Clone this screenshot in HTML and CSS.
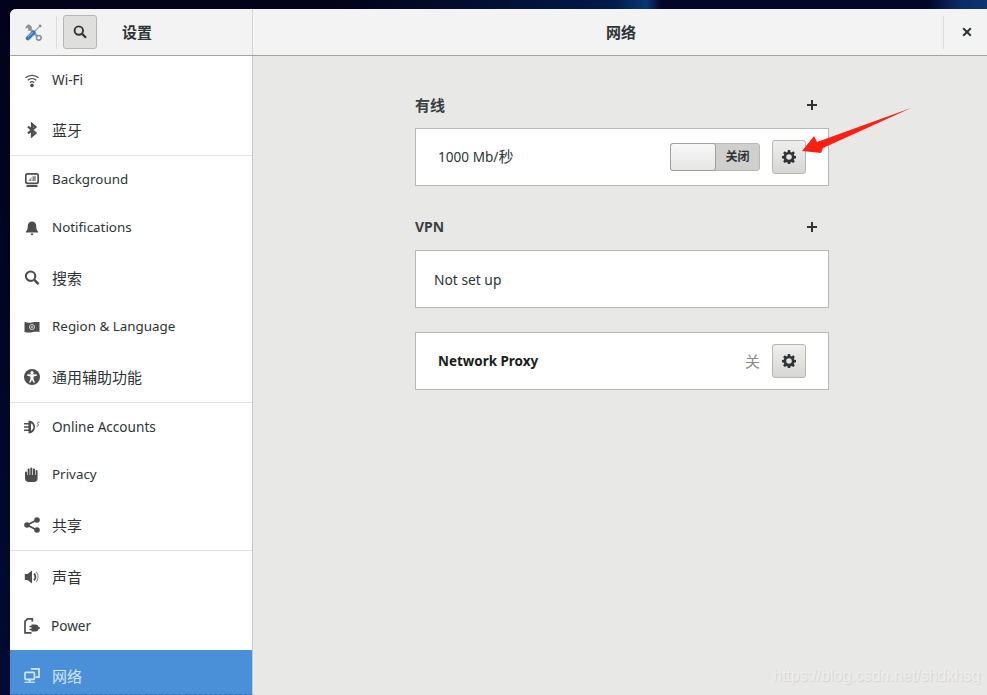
FILE: index.html
```html
<!DOCTYPE html>
<html lang="zh">
<head>
<meta charset="utf-8">
<title>设置</title>
<link rel="stylesheet" href="styles.css">
</head>
<body>
<div class="window">
  <header class="titlebar">
    <div class="tb-left">
      <svg class="app-icon" viewBox="0 0 16 16" width="17" height="17">
        <path d="M3.500 3.500 12.500 12.500" stroke="#9a9ea2" stroke-width="2.400"/>
        <path d="M4.300 .6A3.400 3.400 0 0 0 .6 4.600l1.800-1.200L3.600 4.600 2.400 6.300A3.400 3.400 0 0 0 6.500 2.800z" fill="#8b9094"/>
        <circle cx="13" cy="13" r="2.200" fill="#f3f3f3" stroke="#8b9094" stroke-width="1.500"/>
        <path d="M15 1 8.500 7.500" stroke="#a6aaad" stroke-width="1.400"/>
        <path d="M14 .2l1.800 1.800-1.200 1-1.600-1.600z" fill="#777c80"/>
        <path d="M8 8 2.700 13.300" stroke="#3a78c2" stroke-width="4" stroke-linecap="round"/>
        <path d="M7.400 7.600 2.800 12.200" stroke="#86b5e5" stroke-width="1"/>
      </svg>
      <span class="tb-sep"></span>
      <button class="tb-btn" type="button">
        <svg viewBox="0 0 16 16" width="16" height="16"><circle cx="6.800" cy="6.600" r="4.200" fill="none" stroke="#2e3436" stroke-width="1.900"/><path d="M10 9.800l4 4" stroke="#2e3436" stroke-width="2.300"/></svg>
      </button>
      <span class="tb-title">设置</span>
    </div>
    <div class="tb-right">
      <span class="tb-center">网络</span>
      <span class="tb-sep close-sep"></span>
      <svg class="close" viewBox="0 0 10 10" width="10" height="10"><path d="M1.200 1.200 8.800 8.800M8.800 1.200 1.200 8.800" stroke="#2e3436" stroke-width="2"/></svg>
    </div>
  </header>
  <div class="body">
    <nav class="sidebar">
      <div class="row latin">
        <svg viewBox="0 0 16 16" width="16" height="16"><path d="M1.500 5.800a10 10 0 0 1 13 0M3.700 8.200a6.700 6.700 0 0 1 8.600 0M5.900 10.500a3.400 3.400 0 0 1 4.200 0" fill="none" stroke="#4d4d4d" stroke-width="1.300"/><circle cx="8" cy="13.400" r="1.800" fill="#4d4d4d"/></svg>
        <span class="wide">Wi-Fi</span>
      </div>
      <div class="row cjk sep">
        <svg viewBox="0 0 16 16" width="16" height="16"><path d="M4 4.600 11.500 10.900 8 14V2l3.500 3.100L4 11.400" fill="none" stroke="#4d4d4d" stroke-width="2.200"/></svg>
        <span>蓝牙</span>
      </div>
      <div class="row latin">
        <svg viewBox="0 0 16 16" width="16" height="16"><rect x="1.800" y="1.800" width="12.400" height="9.600" rx="1.800" fill="none" stroke="#4d4d4d" stroke-width="1.700"/><path d="M4.200 9 7.400 5v4zM8.400 4.200h3.400V9H8.400z" fill="#8a8a8a"/><path d="M2.500 14h11" stroke="#4d4d4d" stroke-width="1.800"/></svg>
        <span>Background</span>
      </div>
      <div class="row latin">
        <svg viewBox="0 0 16 16" width="16" height="16"><path d="M8 1.500a4.200 4.200 0 0 1 4.200 4.200c0 3.200.6 4.700 2 6v.8H1.800v-.8c1.400-1.300 2-2.800 2-6A4.200 4.200 0 0 1 8 1.500z" fill="#4d4d4d"/><path d="M6.800 13.600h2.400V15H6.800z" fill="#4d4d4d"/></svg>
        <span>Notifications</span>
      </div>
      <div class="row cjk">
        <svg viewBox="0 0 16 16" width="16" height="16"><circle cx="6.600" cy="6.200" r="4.700" fill="none" stroke="#4d4d4d" stroke-width="2.100"/><path d="M10 9.600l4.600 4.600" stroke="#4d4d4d" stroke-width="2.600"/></svg>
        <span>搜索</span>
      </div>
      <div class="row latin">
        <svg viewBox="0 0 16 16" width="16" height="16"><path d="M.5 3c3 1 5 1 7.500.4s5-.6 7.500-.4v10c-2.500-.4-5-.4-7.500.2s-5 .4-7.500-.2z" fill="#4d4d4d"/><circle cx="8" cy="8" r="2.500" fill="none" stroke="#d8d8d8" stroke-width="1"/><circle cx="8" cy="8" r=".9" fill="#d8d8d8"/></svg>
        <span>Region &amp; Language</span>
      </div>
      <div class="row cjk sep">
        <svg viewBox="0 0 16 16" width="16" height="16"><circle cx="8" cy="8" r="8" fill="#4d4d4d"/><circle cx="8" cy="3.700" r="1.600" fill="#fff"/><path d="M3.200 5.300h9.600v1.400l-3.200.8v2.200l1.300 3.700-1.300.4L8 10.700l-1.600 3.100-1.300-.4 1.300-3.700V7.500l-3.200-.8z" fill="#fff"/></svg>
        <span>通用辅助功能</span>
      </div>
      <div class="row latin">
        <svg viewBox="0 0 16 16" width="16" height="16"><path d="M0 4.800h5M0 8h5M0 11.200h5" stroke="#4d4d4d" stroke-width="1.500"/><path d="M4.500 1.500c4 0 6.500 3 6.500 6.500s-2.500 6.500-6.500 6.500z" fill="#4d4d4d"/><path d="M7 4.200c1.600 1 2.400 2.300 2.400 3.800S8.600 10.800 7 11.800z" fill="#fff"/><path d="M15.500 3.400c-1.700-.8-2.600.6-1.500 1.700s.4 2.500-1.400 1.900" fill="none" stroke="#6a6a6a" stroke-width="1"/></svg>
        <span class="wide">Online Accounts</span>
      </div>
      <div class="row latin">
        <svg viewBox="0 0 16 16" width="16" height="16"><path d="M1 5.500a1 1 0 0 1 2 0V8h.6V2.500a1 1 0 0 1 2 0V8h.7V1.500a1 1 0 0 1 2 0V8h.7V2.500a1 1 0 0 1 2 0V8h.6V4a1 1 0 0 1 2 0v7.500c0 2-1.500 3.500-3.500 3.500H4.500C2.500 15 1 13.500 1 11.500z" fill="#4d4d4d"/></svg>
        <span>Privacy</span>
      </div>
      <div class="row cjk sep">
        <svg viewBox="0 0 16 16" width="16" height="16"><path d="M13 3 3 8l10 5" fill="none" stroke="#4d4d4d" stroke-width="1.800"/><circle cx="13" cy="3" r="2.800" fill="#4d4d4d"/><circle cx="3" cy="8" r="2.800" fill="#4d4d4d"/><circle cx="13" cy="13" r="2.800" fill="#4d4d4d"/></svg>
        <span>共享</span>
      </div>
      <div class="row cjk">
        <svg viewBox="0 0 16 16" width="16" height="16"><path d="M.8 5h2.700l4.500-3.500v13L3.500 11H.8z" fill="#4d4d4d"/><path d="M10 4.600a4.800 4.800 0 0 1 0 6.800" fill="none" stroke="#4d4d4d" stroke-width="1.800"/><path d="M12.200 3a7.500 7.500 0 0 1 0 10" fill="none" stroke="#9a9a9a" stroke-width="1.200"/></svg>
        <span>声音</span>
      </div>
      <div class="row latin">
        <svg viewBox="0 0 16 16" width="16" height="16"><path d="M7.500 14.800H1V3.300L3.500.8h4.800v2.700" fill="none" stroke="#4d4d4d" stroke-width="1.700"/><path d="M7.500 6.500h3.700a3.400 3.400 0 0 1 0 7H7.500z" fill="#4d4d4d"/><path d="M5.500 8.500h2.500M5.500 11.500h2.500M13 10h3" stroke="#4d4d4d" stroke-width="1.700"/></svg>
        <span class="shift wide">Power</span>
      </div>
      <div class="row cjk selected">
        <svg viewBox="0 0 16 16" width="16" height="16"><path d="M7 .9h8v8.200h-3.500" fill="none" stroke="#d5e5f5" stroke-width="1.700"/><rect x="1" y="4.400" width="9.400" height="7" rx=".8" fill="none" stroke="#d5e5f5" stroke-width="1.700"/><path d="M.5 13.600h10.400v1.300H.5z" fill="#d5e5f5"/><path d="M4.600 11.400h2v2.400h-2z" fill="#d5e5f5"/></svg>
        <span>网络</span>
      </div>
    </nav>
    <main class="content">
      <section class="group">
        <div class="group-head"><h2 class="zh">有线</h2><svg class="plus" viewBox="0 0 10 10" width="10" height="10"><path d="M5 0v10M0 5h10" stroke="#2e3436" stroke-width="2"/></svg></div>
        <div class="card">
          <span class="card-label speed">1000 Mb/<span class="zh">秒</span></span>
          <div class="switch"><span class="knob"></span><span class="switch-off">关闭</span></div>
          <button class="gear" type="button"><svg viewBox="0 0 16 16" width="14" height="14"><path d="M6.700 0h2.600l.4 2.200 1.300.6L12.900 1.500l1.800 1.800-1.300 1.900.6 1.300 2 .4v2.600l-2 .4-.6 1.300 1.300 1.900-1.800 1.800-1.900-1.300-1.300.6-.4 2.200H6.700l-.4-2.200-1.300-.6-1.900 1.300-1.800-1.800 1.300-1.900-.6-1.300-2-.4V6.900l2-.4.600-1.300-1.300-1.900 1.800-1.800L5 2.800l1.300-.6zM8 4.800a3.200 3.200 0 1 0 0 6.400 3.200 3.200 0 0 0 0-6.400z" fill="#2e3436" fill-rule="evenodd"/></svg></button>
        </div>
      </section>
      <section class="group vpn">
        <div class="group-head"><h2>VPN</h2><svg class="plus" viewBox="0 0 10 10" width="10" height="10"><path d="M5 0v10M0 5h10" stroke="#2e3436" stroke-width="2"/></svg></div>
        <div class="card"><span class="card-label plain">Not set up</span></div>
      </section>
      <div class="card proxy">
        <span class="card-label strong">Network Proxy</span>
        <span class="state">关</span>
        <button class="gear" type="button"><svg viewBox="0 0 16 16" width="14" height="14"><path d="M6.700 0h2.600l.4 2.200 1.300.6L12.900 1.500l1.800 1.800-1.300 1.900.6 1.300 2 .4v2.600l-2 .4-.6 1.300 1.300 1.900-1.800 1.800-1.900-1.300-1.300.6-.4 2.200H6.700l-.4-2.200-1.300-.6-1.900 1.300-1.800-1.800 1.300-1.900-.6-1.300-2-.4V6.900l2-.4.600-1.300-1.300-1.900 1.800-1.800L5 2.800l1.300-.6zM8 4.800a3.200 3.200 0 1 0 0 6.400 3.200 3.200 0 0 0 0-6.400z" fill="#2e3436" fill-rule="evenodd"/></svg></button>
      </div>
    </main>
  </div>
</div>
<svg class="arrow" viewBox="0 0 120 60" width="120" height="60"><path d="M2 46 14 31 17 37 111 3 23 43 21 48z" fill="#fb2012"/></svg>
<span class="watermark">https://blog.csdn.net/shdxhsq</span>
</body>
</html>
```
FILE: styles.css
```css
* { box-sizing: border-box; }
html, body { height: 100%; }
body {
  margin: 0;
  height: 695px;
  overflow: hidden;
  padding: 9px 0 0 10px;
  position: relative;
  background:
    linear-gradient(90deg, #02021a 0, #02021a 34%, #011a48 62%, #0a3672 65.5%, #03062a 67%, #03062a 94%, #0b2a63 97%, #0d3570 100%) no-repeat top / 100% 9px,
    linear-gradient(180deg, #02021a, #000a33);
  font-family: "Noto Sans", "Noto Sans CJK SC", sans-serif;
  font-size: 13.4px;
  color: #2e3436;
}
.window {
  width: 977px;
  height: 686px;
  display: flex;
  flex-direction: column;
  border-radius: 6px 0 0 0;
  overflow: hidden;
  background: #e8e8e7;
}
.titlebar {
  height: 47px;
  flex: none;
  display: flex;
  background: #f3f3f3;
  border-bottom: 1px solid #a3a39f;
}
.tb-left {
  width: 243px;
  flex: none;
  display: flex;
  align-items: center;
  border-right: 1px solid #d4d4d2;
  padding-left: 15px;
}
.app-icon { flex: none; }
.tb-sep { width: 1px; height: 33px; background: #dcdcda; flex: none; }
.tb-left .tb-sep { margin-left: 14px; }
.tb-btn {
  width: 34px;
  height: 34px;
  margin-left: 6px;
  padding: 0;
  display: flex;
  align-items: center;
  justify-content: center;
  border: 1px solid #b6b6b3;
  border-radius: 3px;
  background: #dfdfdd;
}
.tb-title { margin: -2px 0 0 25px; font-weight: 700; font-size: 15px; color: #2e3436; }
.tb-right {
  flex: 1;
  display: flex;
  align-items: center;
  position: relative;
  justify-content: flex-end;
}
.tb-center { position: absolute; left: 353px; top: 12px; font-weight: 700; font-size: 15px; }
.close-sep { margin-right: 18px; }
.close { margin-right: 15px; }
.body { flex: 1; display: flex; min-height: 0; }
.sidebar {
  width: 243px;
  flex: none;
  background: #fff;
  border-right: 1px solid #c9c9c6;
  overflow: hidden;
}
.row {
  display: flex;
  align-items: center;
  gap: 12px;
  padding-left: 14px;
  color: #2e3436;
  position: relative;
}
.row svg { flex: none; }
.latin { height: 48px; }
.latin span { margin-top: -2px; }
.latin .wide { font-size: 13.6px; }
.cjk { height: 51px; font-size: 15px; }
.sep { height: 52px; border-bottom: 1px solid #e2e2e0; }
.shift { margin-left: -1px; }
.selected { background: #4a90d9; color: #d5e5f5; }
.selected::after {
  content: "";
  position: absolute;
  left: 0;
  right: 0;
  top: 44px;
  border-top: 1px dashed #2f6fb5;
}
.content { flex: 1; padding: 38px 0 0 162px; }
.group-head {
  width: 414px;
  height: 22px;
  margin-bottom: 12px;
  display: flex;
  align-items: center;
  justify-content: space-between;
  padding-right: 12px;
}
.group-head h2 { margin: -2px 0 0; font-size: 14px; font-weight: 700; color: #3a3f41; }
.group-head .zh { font-size: 15px; }
.zh { font-size: 15px; }
.plus { flex: none; }
.vpn { margin-top: 30px; }
.card {
  width: 414px;
  height: 58px;
  background: #fff;
  border: 1px solid #b8b8b5;
  display: flex;
  align-items: center;
  padding: 0 22px;
}
.card-label { flex: 1; color: #2e3436; }
.speed { margin-top: -3px; font-size: 13.6px; }
.plain { margin-left: -4px; font-size: 13.8px; }
.strong { font-weight: 700; font-size: 13.45px; color: #1a1c1d; }
.proxy { margin-top: 24px; }
.switch {
  width: 90px;
  height: 28px;
  display: flex;
  border: 1px solid #b8b8b5;
  border-radius: 3px;
  background: #cfcfcd;
  margin-right: 12px;
}
.knob {
  width: 46px;
  margin: -1px 0 -1px -1px;
  background: linear-gradient(180deg, #f8f8f8, #e6e6e5);
  border: 1px solid #9e9e9a;
  border-radius: 3px;
}
.switch-off {
  flex: 1;
  text-align: center;
  font-size: 12px;
  font-weight: 700;
  line-height: 26px;
  color: #2e3436;
}
.state { color: #8a8c8c; margin: -2px 12px 0 0; font-size: 15px; }
.gear {
  width: 34px;
  height: 34px;
  padding: 0;
  display: flex;
  align-items: center;
  justify-content: center;
  border: 1px solid #b6b6b3;
  border-radius: 3px;
  background: linear-gradient(180deg, #efefee, #d6d6d4);
}
.arrow { position: absolute; left: 800px; top: 105px; }
.watermark {
  position: absolute;
  left: 773px;
  top: 666px;
  font-family: "Liberation Sans", sans-serif;
  font-size: 16px;
  line-height: 20px;
  color: #eeeeee;
  text-shadow: 1px 1px 1px #d2d2d0;
}
```
